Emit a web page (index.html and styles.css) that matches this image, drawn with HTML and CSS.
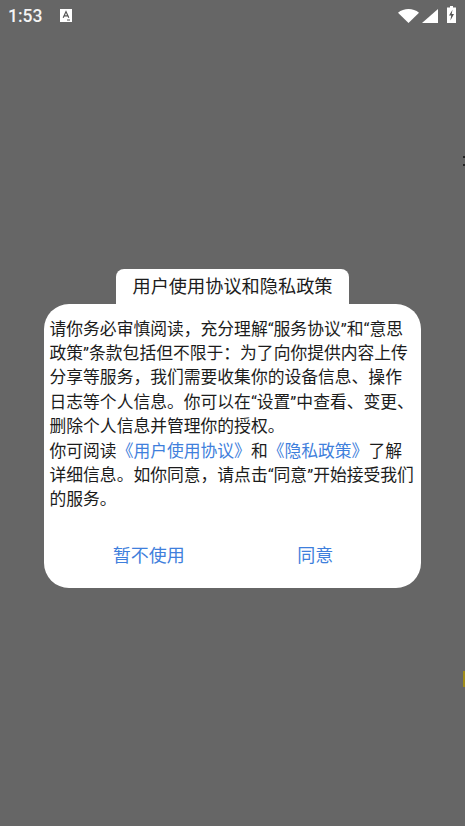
FILE: index.html
```html
<!DOCTYPE html>
<html lang="zh-CN">
<head>
<meta charset="utf-8">
<title>用户使用协议和隐私政策</title>
<link rel="stylesheet" href="styles.css">
</head>
<body>
<div class="screen">
  <header class="status">
    <div class="status-left">
      <span class="time">1:53</span>
      <svg class="a-icon" width="12" height="13" viewBox="0 0 12 13"><rect width="12" height="13" fill="#fff"/><path d="M3.200 8.800 6 2.600l2.800 6.200M4.200 6.800h3.600" fill="none" stroke="#555" stroke-width="1.200"/><path d="M7 11h3" stroke="#555" stroke-width="1"/></svg>
    </div>
    <div class="status-right">
      <svg width="21" height="14" viewBox="0 0 21 14"><path d="M0 3.800C5.800-1.200 15.200-1.200 21 3.800L10.500 14z" fill="#fff"/></svg>
      <svg class="signal" width="16" height="14" viewBox="0 0 16 14"><path d="M16 0v14H0z" fill="#fff"/></svg>
      <svg class="battery" width="9" height="17" viewBox="0 0 9 17"><path d="M3 0h3v1.500h3V17H0V1.500h3z" fill="#fff"/><path d="M5.500 3.800 2 9.500h2.200l-.8 5L7 8H4.700z" fill="#555"/></svg>
    </div>
  </header>
  <main class="stage">
    <section class="dialog">
      <h1 class="title">用户使用协议和隐私政策</h1>
      <div class="card">
        <p class="body">请你务必审慎阅读，充分理解“服务协议”和“意思政策”条款包括但不限于：为了向你提供内容上传分享等服务，我们需要收集你的设备信息、操作日志等个人信息。你可以在“设置”中查看、变更、删除个人信息并管理你的授权。<br>你可阅读<a class="link">《用户使用协议》</a>和<a class="link">《隐私政策》</a>了解详细信息。如你同意，请点击“同意”开始接受我们的服务。</p>
        <div class="actions">
          <button class="action">暂不使用</button>
          <button class="action">同意</button>
        </div>
      </div>
    </section>
  </main>
  <span class="edge edge-dark"></span>
  <span class="edge edge-yellow"></span>
</div>
</body>
</html>
```
FILE: styles.css
```css
* { box-sizing: border-box; }
html, body { margin: 0; padding: 0; }
body { width: 465px; height: 826px; overflow: hidden; background: #666; }
.screen {
  position: relative;
  width: 465px;
  height: 826px;
  background: #666;
  font-family: Roboto, "Noto Sans CJK SC", "Liberation Sans", sans-serif;
  display: flex;
  flex-direction: column;
}
.status {
  height: 32px;
  flex: none;
  padding: 0 9px 0 8px;
  display: flex;
  align-items: center;
  justify-content: space-between;
  color: #fff;
}
.status-left { display: flex; align-items: center; gap: 18px; }
.time { font: 500 17.500px/32px Roboto, sans-serif; color: #f4f4f4; }
.a-icon { display: block; margin-top: -1px; }
.status-right { display: flex; align-items: flex-start; gap: 3px; height: 32px; }
.status-right svg { display: block; margin-top: 9px; }
.status-right .battery { margin-top: 6px; margin-left: 6px; }
.stage { flex: 1; padding: 237px 44px 0; }
.dialog { display: flex; flex-direction: column; align-items: center; }
.title {
  margin: 0;
  width: 233px;
  height: 35px;
  background: #fff;
  border-radius: 8px 8px 0 0;
  font-size: 18.200px;
  font-weight: 400;
  line-height: 35px;
  text-align: center;
  color: #1c1c1c;
}
.card {
  width: 377px;
  height: 284px;
  background: #fff;
  border-radius: 25px;
  padding: 12.500px 7px 0 5.500px;
  display: flex;
  flex-direction: column;
}
.body {
  margin: 0;
  font-size: 16.800px;
  line-height: 24.400px;
  color: #1c1c1c;
}
.link { color: #3f7fdc; }
.actions { display: flex; margin-top: 31.500px; padding: 0 15.500px 0 16px; }
.action {
  flex: 1;
  border: 0;
  background: none;
  padding: 0;
  font: inherit;
  font-size: 18px;
  line-height: 26px;
  color: #3f7fdc;
}
.edge { position: absolute; right: 0; width: 2px; }
.edge-dark { top: 156px; height: 10px; background: linear-gradient(#222 0 2px, transparent 2px 8px, #222 8px 10px); }
.edge-yellow { top: 671px; height: 16px; background: #a08c18; }
```
